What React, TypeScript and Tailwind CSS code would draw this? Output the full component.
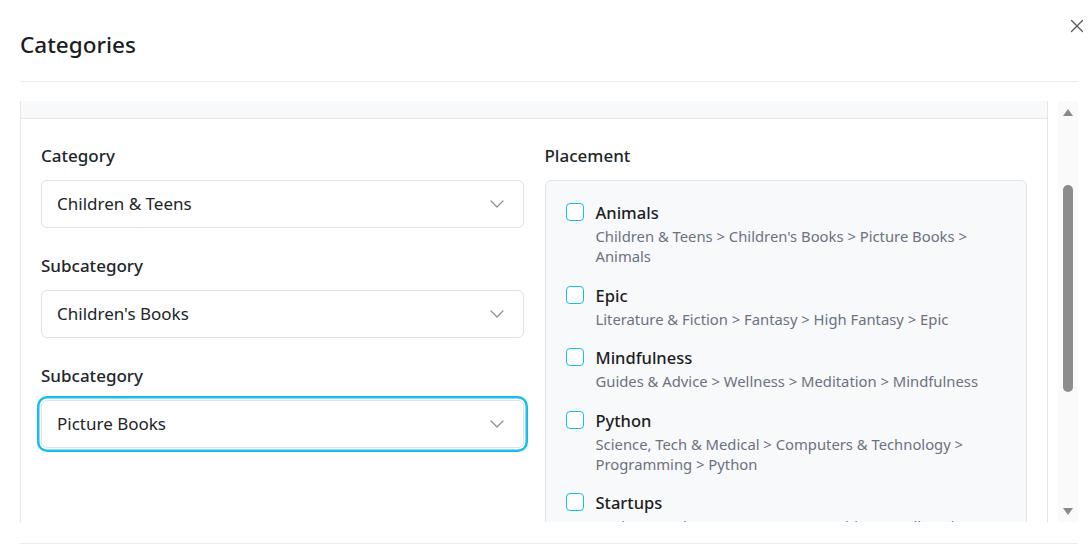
import { X } from "lucide-react";

const placements = [
  {
    name: "Animals",
    path: "Children & Teens > Children's Books > Picture Books > Animals",
  },
  { name: "Epic", path: "Literature & Fiction > Fantasy > High Fantasy > Epic" },
  {
    name: "Mindfulness",
    path: "Guides & Advice > Wellness > Meditation > Mindfulness",
  },
  {
    name: "Python",
    path: "Science, Tech & Medical > Computers & Technology > Programming > Python",
  },
  {
    name: "Startups",
    path: "Business & Finance > Entrepreneurship > Small Business > Startups",
  },
];

function Chevron() {
  return (
    <svg width="14" height="8" viewBox="0 0 14 8" fill="none">
      <path d="M1 1l6 6 6-6" stroke="#8a8f96" strokeWidth="1.2" strokeLinecap="round" strokeLinejoin="round" />
    </svg>
  );
}

function Select({ label, value, focused }: { label: string; value: string; focused?: boolean }) {
  return (
    <div className="flex flex-col gap-3">
      <span className="text-[17px] leading-6 font-medium text-[#212529]">{label}</span>
      <div
        className={
          focused
            ? "flex h-12 items-center justify-between rounded-md border border-[#dfe2e6] bg-white pl-[15px] pr-[19px] shadow-[0_0_0_1.5px_#ffffff,0_0_0_4px_#15bdf0]"
            : "flex h-12 items-center justify-between rounded-md border border-[#dfe2e6] bg-white pl-[15px] pr-[19px]"
        }
      >
        <span className="text-[17px] text-[#212529]">{value}</span>
        <Chevron />
      </div>
    </div>
  );
}

function Scrollbar() {
  return (
    <div className="flex w-5 flex-col items-center bg-[#fafafa] pt-[7px] pb-[6px]">
      <svg width="12" height="9" viewBox="0 0 12 9">
        <path d="M6 1L11 8H1z" fill="#8a8a8a" />
      </svg>
      <div className="mt-[68px] h-[207px] w-[10px] rounded-full bg-[#8c8c8c]" />
      <div className="flex-1" />
      <svg width="12" height="9" viewBox="0 0 12 9">
        <path d="M6 8L11 1H1z" fill="#8a8a8a" />
      </svg>
    </div>
  );
}

export default function App() {
  return (
    <div className="relative h-[549px] w-[1091px] overflow-hidden bg-white pl-5 pr-[13px] font-['Noto_Sans',sans-serif]">
      <button className="absolute right-[3px] top-[15px] text-[#555555]">
        <X size={22} strokeWidth={1.4} />
      </button>

      <div className="border-b border-[#ececec] pt-[29px] pb-5">
        <h2 className="text-[22.5px] leading-8 font-medium text-[#1d1d1f]">Categories</h2>
      </div>

      <div className="mt-[19px] flex h-[421px] gap-[10px]">
        <div className="flex flex-1 flex-col overflow-hidden border-x border-[#e4e6ea]">
          <div className="h-[18px] shrink-0 border-b border-[#e4e6ea] bg-[#f8f9fb]" />
          <div className="grid grid-cols-2 gap-[21px] px-5 pt-[25px]">
            <div className="flex flex-col gap-[26px]">
              <Select label="Category" value="Children & Teens" />
              <Select label="Subcategory" value="Children's Books" />
              <Select label="Subcategory" value="Picture Books" focused />
            </div>

            <div className="flex flex-col gap-3">
              <span className="text-[17px] leading-6 font-medium text-[#212529]">Placement</span>
              <div className="flex flex-col gap-[16.5px] rounded-md border border-[#e2e5e9] bg-[#f8f9fb] px-5 pt-[19px] pb-5">
                {placements.map((p) => (
                  <div key={p.name} className="flex gap-3">
                    <span className="mt-[3px] h-[18px] w-[18px] shrink-0 rounded-[4px] border-[1.5px] border-[#15bdf0] bg-white" />
                    <div className="flex flex-col">
                      <span className="text-[16.5px] leading-[26px] font-medium text-[#1d1d1f]">{p.name}</span>
                      <span className="text-[14.8px] leading-5 text-[#6b7280]">{p.path}</span>
                    </div>
                  </div>
                ))}
              </div>
            </div>
          </div>
        </div>
        <Scrollbar />
      </div>

      <div className="mt-[21px] border-t border-[#ececec]" />
    </div>
  );
}
